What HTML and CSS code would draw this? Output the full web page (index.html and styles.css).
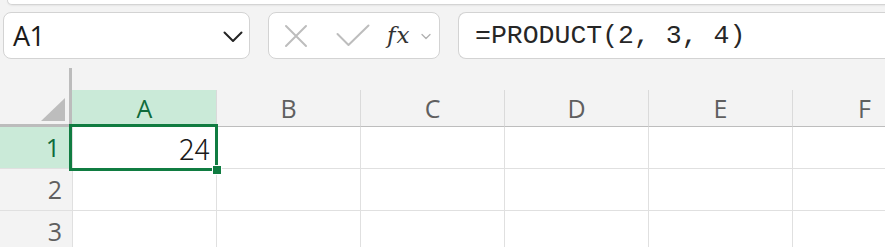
FILE: index.html
```html
<!DOCTYPE html>
<html lang="en">
<head>
<meta charset="utf-8">
<title>Sheet</title>
<link rel="stylesheet" href="styles.css">
</head>
<body>
<div class="ribbon"></div>
<div class="formula-row">
  <div class="namebox">
    <span class="ref">A1</span>
    <svg class="chev" width="20" height="12" viewBox="0 0 20 12"><path d="M1.5 1.5 L10 10 L18.5 1.5" fill="none" stroke="#242424" stroke-width="2" stroke-linecap="round" stroke-linejoin="round"/></svg>
  </div>
  <div class="fxbox">
    <svg class="ico-x" width="24" height="24" viewBox="0 0 24 24"><path d="M2 2 L22 22 M22 2 L2 22" fill="none" stroke="#bdbdbd" stroke-width="2" stroke-linecap="round"/></svg>
    <svg class="ico-check" width="34" height="24" viewBox="0 0 34 24"><path d="M1.5 10 L12.5 21 L32.5 1.5" fill="none" stroke="#bdbdbd" stroke-width="2" stroke-linecap="round" stroke-linejoin="round"/></svg>
    <span class="fx">fx</span>
    <svg class="ico-dd" width="10" height="7" viewBox="0 0 10 7"><path d="M1 1.5 L5 5.5 L9 1.5" fill="none" stroke="#b0b0b0" stroke-width="1.3" stroke-linecap="round" stroke-linejoin="round"/></svg>
  </div>
  <div class="formula-input">=PRODUCT(2, 3, 4)</div>
</div>
<div class="sheet">
  <div class="grid">
    <div class="corner"><span class="tri"></span></div>
    <div class="colhead sel">A</div>
    <div class="colhead">B</div>
    <div class="colhead">C</div>
    <div class="colhead">D</div>
    <div class="colhead">E</div>
    <div class="colhead">F</div>

    <div class="rowhead sel">1</div>
    <div class="cell num">24</div>
    <div class="cell"></div><div class="cell"></div><div class="cell"></div><div class="cell"></div><div class="cell"></div>

    <div class="rowhead">2</div>
    <div class="cell"></div><div class="cell"></div><div class="cell"></div><div class="cell"></div><div class="cell"></div><div class="cell"></div>

    <div class="rowhead">3</div>
    <div class="cell"></div><div class="cell"></div><div class="cell"></div><div class="cell"></div><div class="cell"></div><div class="cell"></div>
  </div>
  <div class="selection"><span class="handle"></span></div>
</div>
</body>
</html>
```

FILE: styles.css
```css
html, body {
  margin: 0;
  padding: 0;
}
body {
  background: #f3f3f3;
  width: 885px;
  height: 247px;
  overflow: hidden;
  font-family: "Open Sans", "Noto Sans", sans-serif;
}

.ribbon {
  height: 4px;
  margin-left: 7px;
  margin-right: -20px;
  background: #ffffff;
  border: 1px solid #d4d4d4;
  border-top: none;
  border-radius: 0 0 9px 9px;
  box-shadow: 0 1px 2px rgba(0, 0, 0, 0.06);
}

.formula-row {
  display: flex;
  gap: 18px;
  margin-top: 7px;
  padding-left: 3px;
  height: 47px;
}

.namebox,
.fxbox,
.formula-input {
  box-sizing: border-box;
  height: 47px;
  background: #ffffff;
  border: 1.5px solid #d3d3d3;
  border-radius: 8px;
  display: flex;
  align-items: center;
}

.namebox {
  width: 247px;
  flex: none;
  padding: 0 6px 0 9px;
  justify-content: space-between;
}
.ref {
  font-family: "Open Sans", sans-serif;
  font-size: 27px;
  color: #1b1b1b;
  letter-spacing: -0.5px;
  line-height: 1;
}
.chev {
  margin-top: 2px;
}

.fxbox {
  width: 172px;
  flex: none;
  padding-left: 15px;
}
.ico-x {
  margin-top: 1px;
}
.ico-check {
  margin-left: 28px;
  margin-top: 1px;
}
.fx {
  margin-left: 17px;
  font-family: "DejaVu Serif", serif;
  font-style: italic;
  font-size: 23px;
  letter-spacing: 1px;
  color: #333333;
  line-height: 1;
}
.ico-dd {
  margin-left: 11px;
  margin-top: 1px;
}

.formula-input {
  flex: none;
  width: 460px;
  border-right: none;
  border-radius: 8px 0 0 8px;
  padding-left: 16px;
  font-family: "Liberation Mono", "DejaVu Sans Mono", monospace;
  font-size: 26.5px;
  color: #262626;
  white-space: pre;
}

.sheet {
  position: relative;
  margin-top: 9px;
  width: 885px;
  overflow: hidden;
}
.grid {
  display: grid;
  grid-template-columns: 72px repeat(6, 144px);
  grid-template-rows: 59px repeat(3, 42px);
  width: 936px;
}

.corner {
  box-sizing: border-box;
  border-right: 3px solid #bcbcbc;
  border-bottom: 3px solid #bcbcbc;
  display: flex;
  justify-content: flex-end;
  align-items: flex-end;
  padding: 0 4px 3px 0;
}
.tri {
  width: 24px;
  height: 23px;
  background: #bdbdbd;
  clip-path: polygon(100% 0, 100% 100%, 0 100%);
}

.colhead {
  align-self: end;
  box-sizing: border-box;
  height: 37px;
  border-left: 1px solid #dadada;
  border-bottom: 1px solid #bdbdbd;
  display: flex;
  align-items: center;
  justify-content: center;
  font-size: 25px;
  color: #5f5f5f;
  line-height: 1;
}
.colhead.sel {
  background: #caead8;
  color: #0f6b3b;
  border-left-color: #caead8;
}

.rowhead {
  box-sizing: border-box;
  border-bottom: 1px solid #e0e0e0;
  display: flex;
  align-items: center;
  justify-content: flex-end;
  padding-right: 10px;
  font-size: 25px;
  color: #5f5f5f;
  line-height: 1;
}
.rowhead.sel {
  background: #caead8;
  color: #0f6b3b;
  margin-right: 2px;
}

.cell {
  box-sizing: border-box;
  background: #ffffff;
  border-left: 1px solid #e0e0e0;
  border-bottom: 1px solid #e0e0e0;
}
.cell.num {
  display: flex;
  align-items: center;
  justify-content: flex-end;
  padding-right: 6px;
  font-family: "Noto Sans CJK JP", "Noto Sans", sans-serif;
  font-weight: 300;
  font-size: 29px;
  color: #1a1a1a;
  line-height: 1;
}

.selection {
  position: absolute;
  left: 69px;
  top: 56px;
  width: 149px;
  height: 47px;
  box-sizing: border-box;
  border: 3px solid #107c41;
}
.handle {
  position: absolute;
  left: 140px;
  top: 38px;
  width: 8px;
  height: 8px;
  background: #107c41;
  border: 1px solid #ffffff;
}
```
